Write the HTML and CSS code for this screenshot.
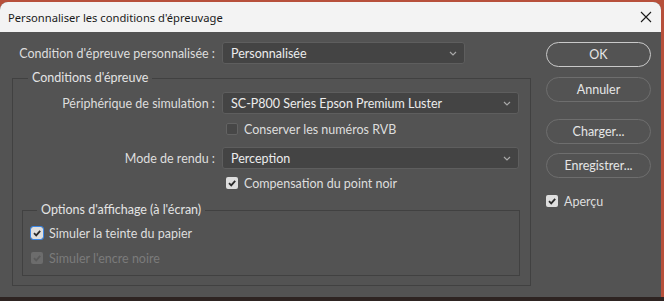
FILE: index.html
```html
<!DOCTYPE html>
<html lang="fr">

<head>
    <meta charset="utf-8">
    <title>Personnaliser les conditions d'épreuvage</title>
    <link rel="stylesheet" href="styles.css">
</head>

<body>

    <div class="fenetre">
        <header class="titre">
            <span>Personnaliser les conditions d'épreuvage</span>
            <svg class="fermer" width="12" height="12" viewBox="0 0 12 12">
                <path d="M1 1 L11 11 M11 1 L1 11" stroke="#1a1a1a" stroke-width="1.1" fill="none" />
            </svg>
        </header>

        <main class="contenu">
            <section class="gauche">
                <div class="ligne ligne-haut">
                    <label class="etiquette">Condition d'épreuve personnalisée :</label>
                    <div class="liste liste-courte">
                        <span>Personnalisée</span>
                        <svg class="chevron" width="8" height="5" viewBox="0 0 8 5"><path d="M1 1 L4 4 L7 1" stroke="#a8a8a8" stroke-width="1.2" fill="none" /></svg>
                    </div>
                </div>

                <fieldset class="groupe">
                    <legend>Conditions d'épreuve</legend>

                    <div class="ligne ligne-premiere">
                        <label class="etiquette etiquette-groupe">Périphérique de simulation :</label>
                        <div class="liste">
                            <span>SC-P800 Series Epson Premium Luster</span>
                            <svg class="chevron" width="8" height="5" viewBox="0 0 8 5"><path d="M1 1 L4 4 L7 1" stroke="#a8a8a8" stroke-width="1.2" fill="none" /></svg>
                        </div>
                    </div>

                    <div class="case-ligne case-decalee conserver">
                        <span class="case"></span>
                        <span>Conserver les numéros RVB</span>
                    </div>

                    <div class="ligne ligne-rendu">
                        <label class="etiquette etiquette-groupe">Mode de rendu :</label>
                        <div class="liste">
                            <span>Perception</span>
                            <svg class="chevron" width="8" height="5" viewBox="0 0 8 5"><path d="M1 1 L4 4 L7 1" stroke="#a8a8a8" stroke-width="1.2" fill="none" /></svg>
                        </div>
                    </div>

                    <div class="case-ligne case-decalee compensation">
                        <span class="case cochee">
                            <svg width="12" height="12" viewBox="0 0 12 12"><path d="M3 6.2 L5.2 8.4 L9.2 3.8" stroke="#2b2b2b" stroke-width="1.8" fill="none" /></svg>
                        </span>
                        <span>Compensation du point noir</span>
                    </div>

                    <fieldset class="groupe options">
                        <legend>Options d'affichage (à l'écran)</legend>

                        <div class="case-ligne papier">
                            <span class="case cochee focus">
                                <svg width="12" height="12" viewBox="0 0 12 12"><path d="M3 6.2 L5.2 8.4 L9.2 3.8" stroke="#2b2b2b" stroke-width="1.8" fill="none" /></svg>
                            </span>
                            <span>Simuler la teinte du papier</span>
                        </div>

                        <div class="case-ligne inactif encre">
                            <span class="case cochee">
                                <svg width="12" height="12" viewBox="0 0 12 12"><path d="M3 6.2 L5.2 8.4 L9.2 3.8" stroke="#5a5a5a" stroke-width="1.8" fill="none" /></svg>
                            </span>
                            <span>Simuler l'encre noire</span>
                        </div>
                    </fieldset>
                </fieldset>
            </section>

            <aside class="droite">
                <button class="bouton principal">OK</button>
                <button class="bouton annuler">Annuler</button>
                <button class="bouton charger">Charger...</button>
                <button class="bouton enregistrer">Enregistrer...</button>

                <div class="case-ligne apercu">
                    <span class="case cochee">
                        <svg width="12" height="12" viewBox="0 0 12 12"><path d="M3 6.2 L5.2 8.4 L9.2 3.8" stroke="#2b2b2b" stroke-width="1.8" fill="none" /></svg>
                    </span>
                    <span>Aperçu</span>
                </div>
            </aside>
        </main>
    </div>

</body>

</html>
```

FILE: styles.css
```css
body * {
    box-sizing: border-box;
}

body {
    margin: 0;
    padding: 0;
    height: 301px;
    overflow: hidden;
    background: linear-gradient(#b7503b 297px, #2e2422 297px);
    font-family: Lato, "Open Sans", sans-serif;
    font-size: 12.5px;
    color: #dedede;
}

.fenetre {
    width: 661px;
    height: 295px;
    margin-top: 2px;
    border-radius: 8px 8px 0 0;
    overflow: hidden;
    background-color: #535353;
}

.titre {
    height: 30px;
    display: flex;
    align-items: center;
    justify-content: space-between;
    padding: 0 9px 0 8px;
    background-color: #f3f3f3;
    color: #1a1a1a;
    font-family: "Noto Sans", sans-serif;
    font-size: 11.2px;
}

.contenu {
    display: flex;
    padding: 0 10px 0 12px;
    height: 265px;
}

.gauche {
    width: 519px;
}

.ligne {
    display: flex;
    align-items: center;
    gap: 7px;
}

.ligne-haut {
    margin-top: 10px;
}

.etiquette {
    width: 203px;
    text-align: right;
    white-space: nowrap;
}

.etiquette-groupe {
    width: 202px;
}

.liste {
    width: 297px;
    height: 22px;
    display: flex;
    align-items: center;
    justify-content: space-between;
    padding: 0 7px 0 8px;
    background-color: #444444;
    border: 1px solid #5e5e5e;
    border-radius: 3px;
    color: #ececec;
}

.liste-courte {
    width: 243px;
}

.groupe {
    margin: 6px 0 0 0;
    padding: 0 0 9px 0;
    border: 1px solid #414141;
    border-radius: 0;
}

.groupe legend {
    margin-left: 15px;
    padding: 0 4px;
    line-height: 16px;
    color: #e4e4e4;
}

.ligne-premiere {
    margin-top: 6px;
}

.case-ligne {
    display: flex;
    align-items: center;
    gap: 6px;
    height: 16px;
}

.case-decalee {
    padding-left: 213px;
}

.conserver {
    margin-top: 7px;
}

.ligne-rendu {
    margin-top: 10px;
}

.compensation {
    margin-top: 6px;
}

.case {
    width: 12px;
    height: 12px;
    flex: none;
    display: flex;
    border-radius: 2px;
    background-color: #474747;
    border: 1px solid #636363;
}

.case.cochee {
    border: none;
    background-color: #dedede;
}

.case.focus {
    outline: 1.5px solid #3a86e6;
    outline-offset: 0;
}

.options {
    margin: 11px 10px 0 9px;
    padding: 0 0 9px 8px;
}

.options legend {
    margin-left: 6px;
}

.papier {
    margin-top: 7px;
}

.encre {
    margin-top: 9px;
}

.inactif {
    color: #7b7b7b;
}

.inactif .case.cochee {
    background-color: #6c6c6c;
}

.droite {
    margin-left: 15px;
    display: flex;
    flex-direction: column;
}

.bouton {
    width: 105px;
    height: 25px;
    border-radius: 13px;
    background-color: transparent;
    border: 1.5px solid #6e6e6e;
    color: #e6e6e6;
    font-family: Lato, "Open Sans", sans-serif;
    font-size: 12.5px;
    padding: 0;
}

.principal {
    margin-top: 10px;
    border: 1.5px solid #c9c9c9;
}

.annuler {
    margin-top: 10px;
}

.charger {
    margin-top: 17px;
}

.enregistrer {
    margin-top: 9px;
}

.apercu {
    margin-top: 15px;
}
```
